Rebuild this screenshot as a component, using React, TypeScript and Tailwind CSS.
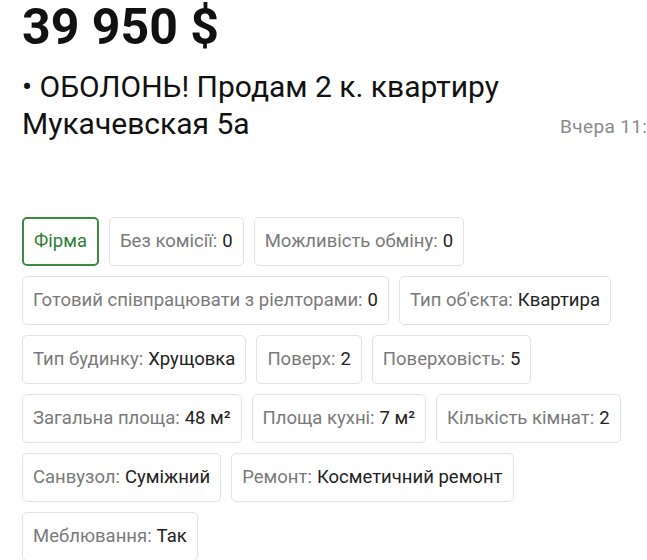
const chips: { label: string; value?: string; accent?: boolean }[][] = [
  [{ label: "Фірма", accent: true }, { label: "Без комісії:", value: "0" }, { label: "Можливість обміну:", value: "0" }],
  [{ label: "Готовий співпрацювати з ріелторами:", value: "0" }, { label: "Тип об'єкта:", value: "Квартира" }],
  [{ label: "Тип будинку:", value: "Хрущовка" }, { label: "Поверх:", value: "2" }, { label: "Поверховість:", value: "5" }],
  [{ label: "Загальна площа:", value: "48 м²" }, { label: "Площа кухні:", value: "7 м²" }, { label: "Кількість кімнат:", value: "2" }],
  [{ label: "Санвузол:", value: "Суміжний" }, { label: "Ремонт:", value: "Косметичний ремонт" }],
  [{ label: "Меблювання:", value: "Так" }],
];

function Chip({ label, value, accent }: { label: string; value?: string; accent?: boolean }) {
  if (accent) {
    return (
      <div className="flex h-[49px] items-center rounded-[5px] border-2 border-[#3d8b3d] px-[10px] text-[18.5px] text-[#2f7d32]">
        {label}
      </div>
    );
  }
  return (
    <div className="flex h-[49px] items-center whitespace-nowrap rounded-[5px] border-[1.5px] border-[#e3e3e3] px-[10px] text-[18.5px] text-[#7a7a7a]">
      {label}
      {value && <span className="ml-[5px] text-[#222]">{value}</span>}
    </div>
  );
}

export default function App() {
  return (
    <div
      className="h-[560px] w-[647px] overflow-hidden bg-white pl-[22px]"
      style={{ fontFamily: "Roboto, 'Noto Sans', sans-serif" }}
    >
      <div className="text-[50px] font-bold leading-[54px] text-[#111]">39 950 $</div>
      <div className="mt-[14px] flex items-end justify-between">
        <div className="text-[30px] leading-[37px] text-[#111]">
          <div>• ОБОЛОНЬ! Продам 2 к. квартиру</div>
          <div>Мукачевская 5а</div>
        </div>
        <div className="mb-[1px] w-[87px] overflow-hidden whitespace-nowrap text-[19px] tracking-[0.02em] text-[#8a8a8a]">Вчера 11:20</div>
      </div>
      <div className="mt-[75px] flex flex-col gap-[10px]">
        {chips.map((row, i) => (
          <div key={i} className="flex gap-[10px]">
            {row.map((c) => (
              <Chip key={c.label} {...c} />
            ))}
          </div>
        ))}
      </div>
    </div>
  );
}
